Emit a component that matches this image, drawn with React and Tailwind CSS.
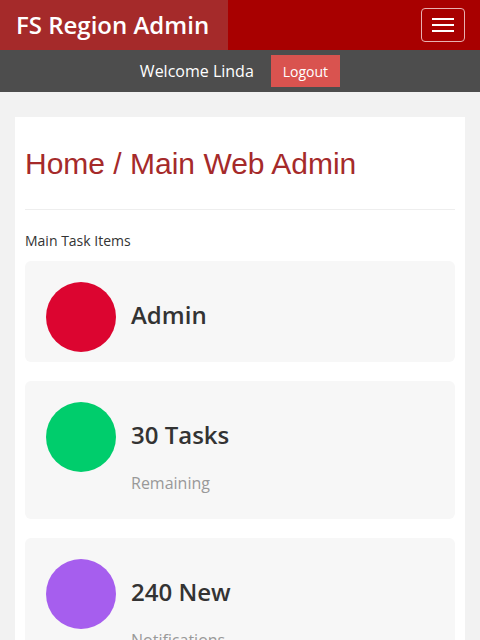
import React from "react";

const items = [
  { title: "Admin", sub: null, color: "bg-[#dc0530]" },
  { title: "30 Tasks", sub: "Remaining", color: "bg-[#00cd6c]" },
  { title: "240 New", sub: "Notifications", color: "bg-[#a65eee]" },
];

const TaskCard = ({ title, sub, color }) => (
  <div className="mb-[19px] flex rounded-md bg-[#f7f7f7] pl-[21px] pt-[21px] pb-[10px]">
    <div className={`h-[70px] w-[70px] shrink-0 rounded-full ${color}`} />
    <div className="ml-[15px]">
      <div className="text-[24px] font-semibold leading-[66px] text-[#333]">
        {title}
      </div>
      {sub && (
        <div className="mt-[3px] mb-[14px] text-[16px] leading-6 text-[#999]">
          {sub}
        </div>
      )}
    </div>
  </div>
);

const App = () => {
  return (
    <div
      className="min-h-[640px] bg-[#f2f2f2]"
      style={{ fontFamily: '"Open Sans", "Liberation Sans", sans-serif' }}
    >
      <header className="flex h-[50px] items-center justify-between bg-[#a80000]">
        <div className="flex h-full w-[228px] shrink-0 items-center whitespace-nowrap bg-[#a52a2a] px-4 text-[24px] font-semibold text-white">
          FS Region Admin
        </div>
        <button className="mr-[15px] flex h-[34px] w-[44px] flex-col items-center justify-center gap-[4px] rounded border border-[#e8b0b0]">
          <span className="block h-[2px] w-[22px] bg-white" />
          <span className="block h-[2px] w-[22px] bg-white" />
          <span className="block h-[2px] w-[22px] bg-white" />
        </button>
      </header>

      <div className="flex h-[42px] items-center justify-center gap-[17px] bg-[#4d4d4d]">
        <span className="text-[16px] text-white">Welcome Linda</span>
        <button className="h-[32px] bg-[#d9534f] px-3 text-[14px] text-white">
          Logout
        </button>
      </div>

      <main className="px-[15px] pt-[25px]">
        <div className="bg-white px-[10px] pt-[10px] pb-[1px]">
          <div className="border-b border-[#eee] pb-[29px]">
            <h1
              className="mt-[20px] text-[30px] leading-[33px] text-[#a52a2a]"
              style={{ fontFamily: '"Liberation Sans", Arial, sans-serif' }}
            >
              Home / Main Web Admin
            </h1>
          </div>
          <p className="mt-[21px] mb-[10px] text-[14px] leading-5 text-[#333]">
            Main Task Items
          </p>
          {items.map((it) => (
            <TaskCard key={it.title} {...it} />
          ))}
        </div>
      </main>
    </div>
  );
};

export default App;
